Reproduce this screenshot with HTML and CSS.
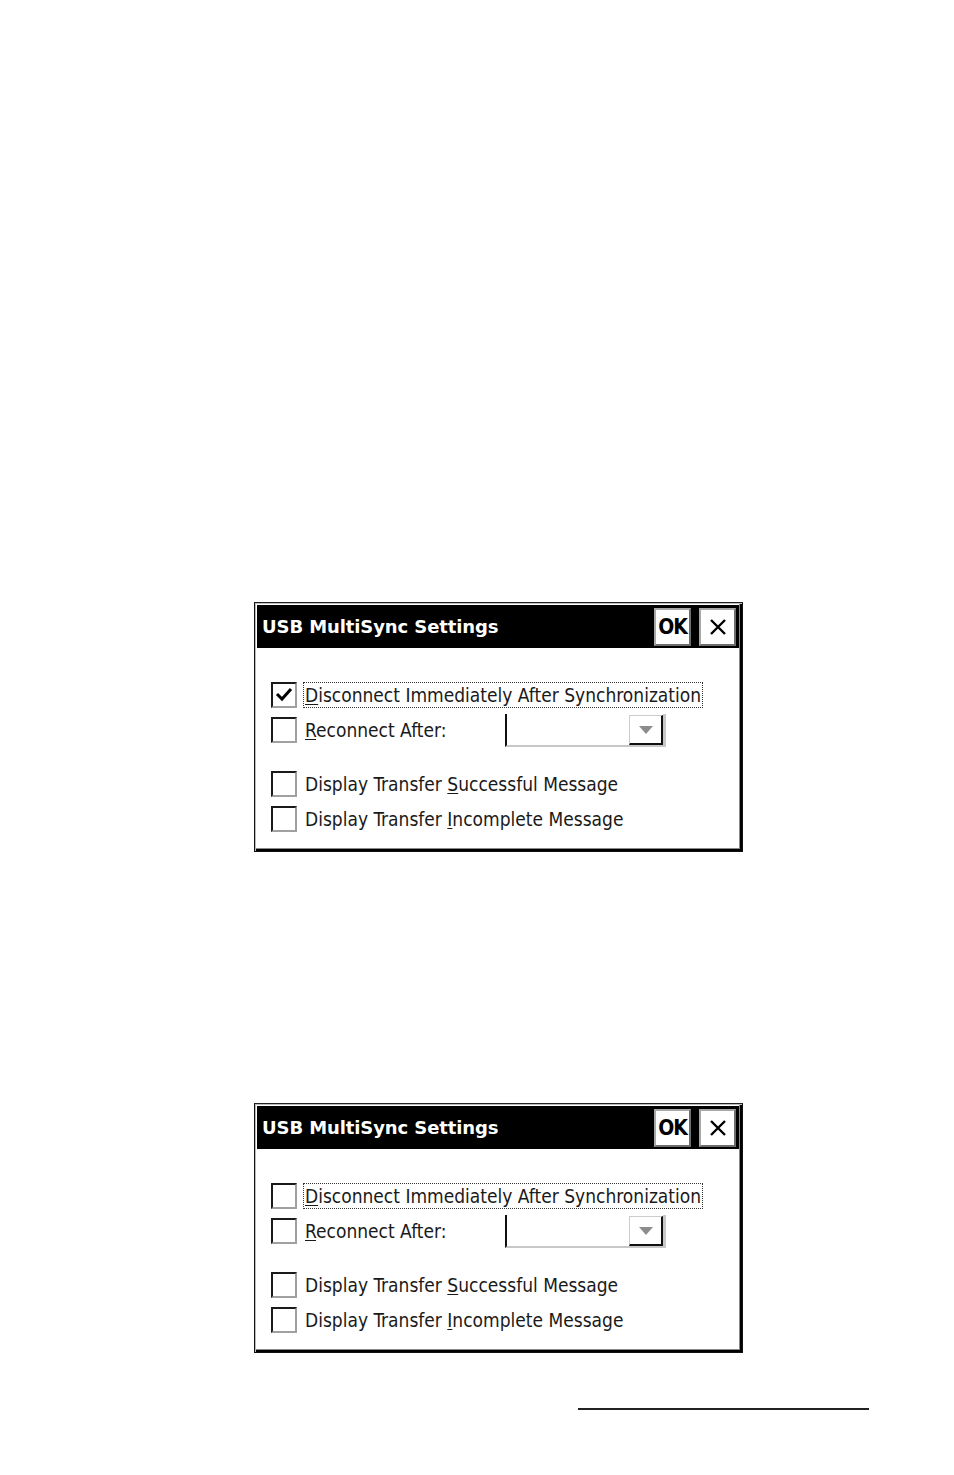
FILE: index.html
```html
<!DOCTYPE html>
<html>
<head>
<meta charset="utf-8">
<link rel="stylesheet" href="styles.css">
</head>
<body>
<div class="page">
  <div class="dialog first">
    <div class="titlebar">
      <span class="title">USB MultiSync Settings</span>
      <div class="tbtns">
        <div class="tbtn ok">OK</div>
        <div class="tbtn close"><svg width="20" height="20" viewBox="0 0 20 20"><path d="M3 3 L17 17 M17 3 L3 17" stroke="#000" stroke-width="2.4" fill="none"/></svg></div>
      </div>
    </div>
    <div class="content">
      <div class="row">
        <span class="cb"><svg width="20" height="20" viewBox="0 0 20 20"><path d="M3 9 L8 14 L17 4" stroke="#000" stroke-width="3" fill="none"/></svg></span>
        <span class="label focus"><u>D</u>isconnect Immediately After Synchronization</span>
      </div>
      <div class="row">
        <span class="cb"></span>
        <span class="label short"><u>R</u>econnect After:</span>
        <span class="combo"><span class="combo-btn"><svg width="14" height="8" viewBox="0 0 14 8"><path d="M0 0 L14 0 L7 8 Z" fill="#8c8c8c"/></svg></span></span>
      </div>
      <div class="row gap">
        <span class="cb"></span>
        <span class="label">Display Transfer <u>S</u>uccessful Message</span>
      </div>
      <div class="row">
        <span class="cb"></span>
        <span class="label">Display Transfer <u>I</u>ncomplete Message</span>
      </div>
    </div>
  </div>

  <div class="dialog second">
    <div class="titlebar">
      <span class="title">USB MultiSync Settings</span>
      <div class="tbtns">
        <div class="tbtn ok">OK</div>
        <div class="tbtn close"><svg width="20" height="20" viewBox="0 0 20 20"><path d="M3 3 L17 17 M17 3 L3 17" stroke="#000" stroke-width="2.4" fill="none"/></svg></div>
      </div>
    </div>
    <div class="content">
      <div class="row">
        <span class="cb"></span>
        <span class="label focus"><u>D</u>isconnect Immediately After Synchronization</span>
      </div>
      <div class="row">
        <span class="cb"></span>
        <span class="label short"><u>R</u>econnect After:</span>
        <span class="combo"><span class="combo-btn"><svg width="14" height="8" viewBox="0 0 14 8"><path d="M0 0 L14 0 L7 8 Z" fill="#8c8c8c"/></svg></span></span>
      </div>
      <div class="row gap">
        <span class="cb"></span>
        <span class="label">Display Transfer <u>S</u>uccessful Message</span>
      </div>
      <div class="row">
        <span class="cb"></span>
        <span class="label">Display Transfer <u>I</u>ncomplete Message</span>
      </div>
    </div>
  </div>

  <div class="footer-rule"></div>
</div>
</body>
</html>
```

FILE: styles.css
```css
html, body {
  margin: 0;
  padding: 0;
  background: #fff;
}
.page {
  width: 954px;
  height: 1475px;
  position: relative;
  overflow: hidden;
  font-family: "DejaVu Sans Condensed", "DejaVu Sans", sans-serif;
  color: #1a1a1a;
}
.dialog {
  margin-left: 254px;
  width: 489px;
  height: 250px;
  box-sizing: border-box;
  border: 1px solid #111;
  border-top-color: #222;
  display: flex;
  flex-direction: column;
  box-shadow: inset 1px 1px 0 #bdbdbd, inset -2px -2px 0 #000, inset -3px -3px 0 #888;
  padding: 2px 3px 3px 2px;
}
.first { margin-top: 602px; }
.second { margin-top: 251px; }

.titlebar {
  height: 43px;
  background: #000;
  display: flex;
  align-items: center;
  justify-content: space-between;
  padding-left: 5px;
  padding-right: 3px;
}
.title {
  color: #fff;
  font-family: "DejaVu Sans", sans-serif;
  font-weight: bold;
  font-size: 18px;
  letter-spacing: -0.1px;
}
.tbtns {
  display: flex;
  gap: 8px;
  align-items: center;
}
.tbtn {
  width: 37px;
  height: 38px;
  box-sizing: border-box;
  background: #fff;
  border: 2px solid #a8a8a8;
  border-right-color: #6e6e6e;
  border-bottom-color: #6e6e6e;
  display: flex;
  align-items: center;
  justify-content: center;
}
.ok {
  font-family: "DejaVu Sans Condensed", "DejaVu Sans", sans-serif;
  font-weight: bold;
  font-size: 21px;
  color: #000;
  letter-spacing: -1px;
}
.content {
  flex: 1;
  background: #fff;
  padding: 29px 0 0 14px;
  display: flex;
  flex-direction: column;
}
.row {
  display: flex;
  align-items: center;
  height: 35px;
  font-size: 19px;
}
.row.gap { margin-top: 19px; }
.cb {
  width: 26px;
  height: 26px;
  box-sizing: border-box;
  border-top: 2px solid #1a1a1a;
  border-left: 2px solid #1a1a1a;
  border-right: 2px solid #a0a0a0;
  border-bottom: 2px solid #a0a0a0;
  display: flex;
  align-items: center;
  justify-content: center;
  margin-right: 7px;
  flex: none;
}
.label {
  white-space: nowrap;
  padding: 1px 1px;
}
.label u { text-decoration-thickness: 1px; text-underline-offset: 2px; }
.focus {
  outline: 1px dotted #333;
  outline-offset: 0;
}
.short { width: 199px; }
.combo {
  width: 161px;
  height: 33px;
  box-sizing: border-box;
  border-left: 2px solid #111;
  border-bottom: 2px solid #c8c8c8;
  border-right: 3px solid #c8c8c8;
  display: flex;
  justify-content: flex-end;
  align-items: flex-start;
  margin-top: 2px;
}
.combo-btn {
  width: 34px;
  height: 30px;
  box-sizing: border-box;
  border-top: 1px solid #ccc;
  border-left: 1px solid #ccc;
  border-right: 2px solid #111;
  border-bottom: 2px solid #111;
  display: flex;
  align-items: center;
  justify-content: center;
  margin-top: 1px;
}
.footer-rule {
  position: absolute;
  left: 578px;
  top: 1408px;
  width: 291px;
  height: 2px;
  background: #222;
}
```
